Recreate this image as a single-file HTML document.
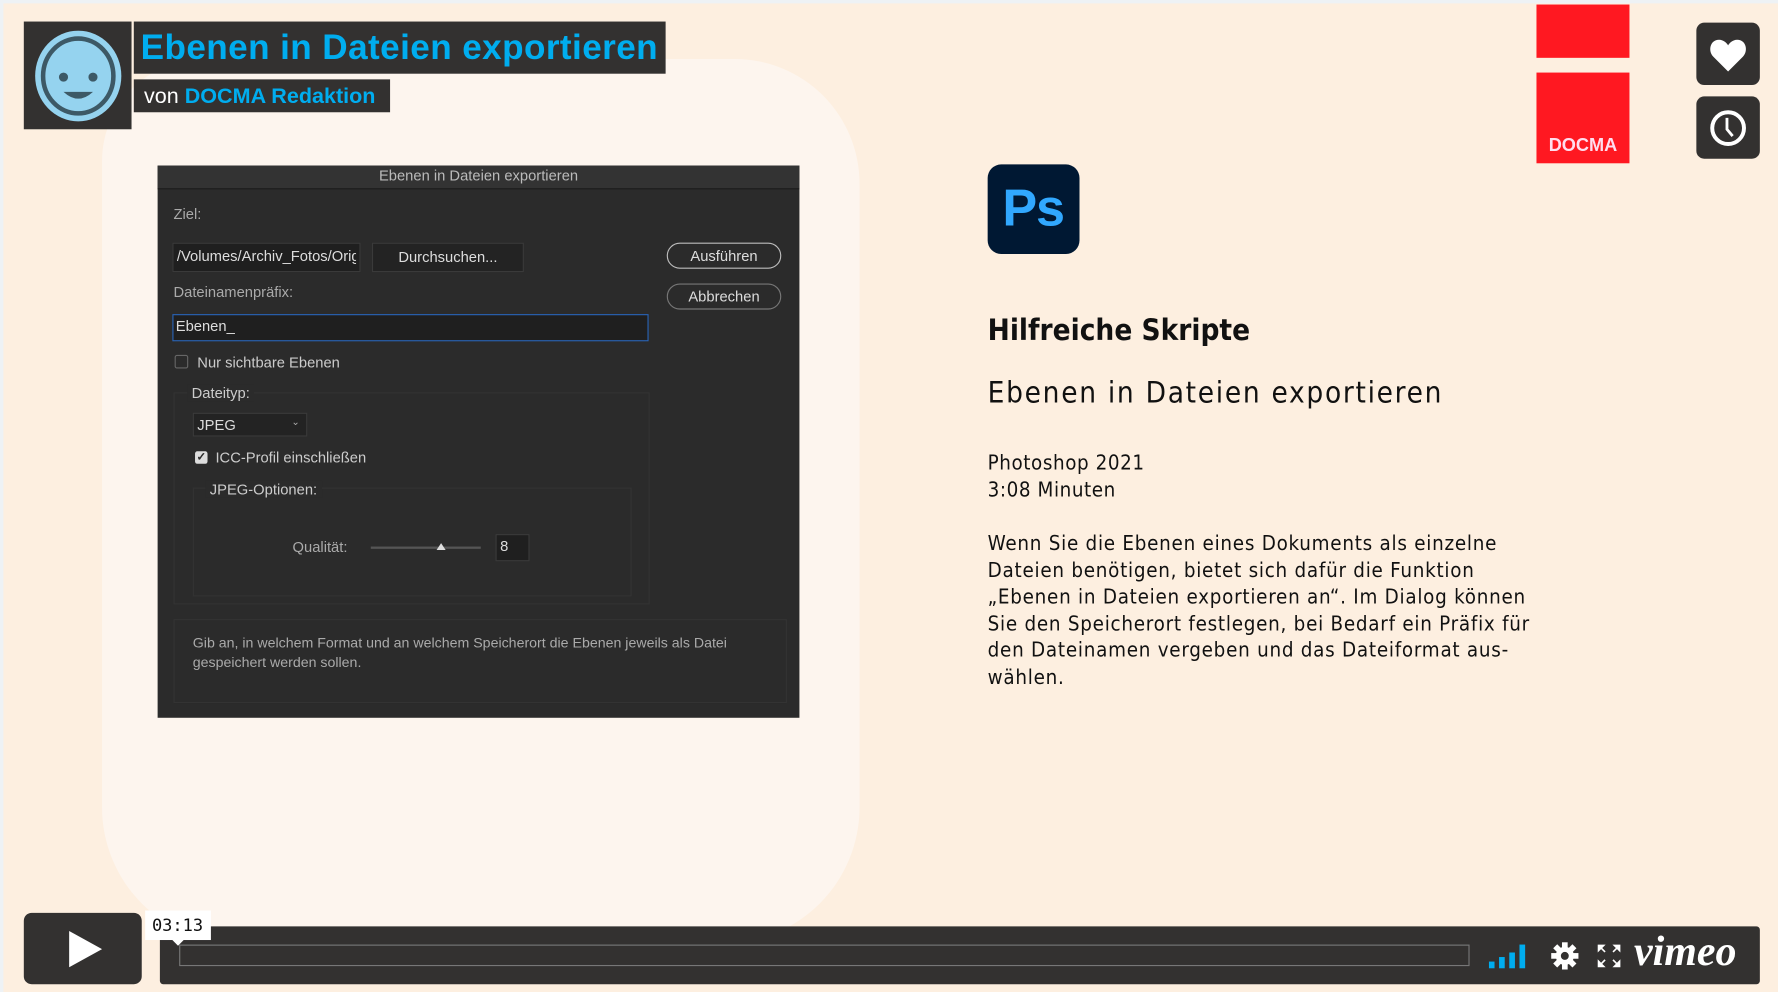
<!DOCTYPE html>
<html><head><meta charset="utf-8"><style>
html,body{margin:0;padding:0;width:1778px;height:992px;overflow:hidden;background:#eef2f5}
#s{position:absolute;left:0;top:0;width:1568px;height:875px;transform:scale(1.13393);transform-origin:0 0;background:#fdefe0;font-family:"Liberation Sans",sans-serif;overflow:hidden}
.a{position:absolute}
.blob{left:90px;top:52px;width:668px;height:780px;background:#fdf5ee;border-radius:90px 110px 120px 120px}
.dlg{left:139px;top:146px;width:566px;height:487px;background:#2b2b2b;color:#c8c8c8;font-size:13px}
.dlg .a{white-space:nowrap}
.inp{background:#1f1f1f;border:1px solid #3a3a3a}
.btn{border:1.5px solid #bdbdbd;border-radius:12px;text-align:center;color:#ddd;font-size:13px;line-height:21px}
.grp{border:1px solid #333}
.txt{font-family:"DejaVu Sans Condensed","DejaVu Sans",sans-serif;color:#111}
</style></head><body><div id="s">
<div class="a" style="left:0;top:0;width:1568px;height:3px;background:#eef2f5"></div>
<div class="a" style="left:0;top:0;width:3px;height:875px;background:#eef2f5"></div>
<div class="a blob"></div>

<div class="a" style="left:21px;top:19px;width:95px;height:95px;background:#333130"></div>
<svg class="a" style="left:28px;top:27px" width="82" height="82" viewBox="0 0 82 82"><ellipse cx="41" cy="40" rx="38" ry="40" fill="#95d3ef"/><ellipse cx="41" cy="40" rx="31" ry="33" fill="none" stroke="#3d5966" stroke-width="4"/><circle cx="28" cy="41" r="4" fill="#3d5966"/><circle cx="54" cy="41" r="4" fill="#3d5966"/><path d="M28 54 Q41 66 54 54 Z" fill="#3d5966"/></svg>
<div class="a" style="left:118px;top:19px;width:469px;height:46px;background:#333130"></div>
<div class="a" style="left:124px;top:24px;font-size:31px;font-weight:bold;color:#00adef;letter-spacing:0.35px;white-space:nowrap">Ebenen in Dateien exportieren</div>
<div class="a" style="left:118px;top:70px;width:226px;height:29px;background:#333130"></div>
<div class="a" style="left:127px;top:75px;font-size:19px;color:#fff;white-space:nowrap">von <b style="color:#00adef">DOCMA Redaktion</b></div>

<div class="a dlg">
 <div class="a" style="left:0;top:0;width:566px;height:20px;background:#333;border-bottom:1px solid #1a1a1a"></div>
 <div class="a" style="left:0;width:566px;top:1px;text-align:center;color:#bbb">Ebenen in Dateien exportieren</div>
 <div class="a" style="left:14px;top:35px;color:#aaa">Ziel:</div>
 <div class="a inp" style="left:13px;top:68px;width:164px;height:24px"></div>
 <div class="a" style="left:17px;top:72px;color:#ddd;width:158px;overflow:hidden">/Volumes/Archiv_Fotos/Orig</div>
 <div class="a inp" style="left:189px;top:68px;width:132px;height:24px;background:#232323"></div>
 <div class="a" style="left:189px;top:73px;width:134px;text-align:center;color:#ddd">Durchsuchen...</div>
 <div class="a btn" style="left:449px;top:68px;width:99px;height:21px">Ausführen</div>
 <div class="a btn" style="left:449px;top:104px;width:99px;height:21px;border-color:#777">Abbrechen</div>
 <div class="a" style="left:14px;top:104px;color:#aaa">Dateinamenpräfix:</div>
 <div class="a" style="left:13px;top:131px;width:418px;height:22px;background:#1f1f1f;border:1.5px solid #2a64b6"></div>
 <div class="a" style="left:16px;top:134px;color:#ddd">Ebenen_</div>
 <div class="a" style="left:15px;top:167px;width:10px;height:10px;border:1px solid #666;border-radius:2px"></div>
 <div class="a" style="left:35px;top:166px;color:#ccc">Nur sichtbare Ebenen</div>
 <div class="a grp" style="left:14px;top:200px;width:418px;height:185px"></div>
 <div class="a" style="left:26px;top:193px;background:#2b2b2b;padding:0 4px;color:#ccc">Dateityp:</div>
 <div class="a inp" style="left:31px;top:218px;width:99px;height:19px;background:#232323"></div>
 <div class="a" style="left:35px;top:221px;color:#ddd">JPEG</div>
 <div class="a" style="left:118px;top:221px;color:#aaa;font-size:9px">⌄</div>
 <div class="a" style="left:33px;top:252px;width:11px;height:11px;background:#ddd;border-radius:2px;color:#2b2b2b;font-size:10px;line-height:11px;text-align:center;font-weight:bold">✓</div>
 <div class="a" style="left:51px;top:250px;color:#ccc">ICC-Profil einschließen</div>
 <div class="a grp" style="left:31px;top:284px;width:385px;height:94px"></div>
 <div class="a" style="left:42px;top:278px;background:#2b2b2b;padding:0 4px;color:#ccc">JPEG-Optionen:</div>
 <div class="a" style="left:119px;top:329px;color:#aaa">Qualität:</div>
 <div class="a" style="left:188px;top:336px;width:97px;height:2px;background:#555"></div>
 <div class="a" style="left:246px;top:333px;width:0;height:0;border-left:4px solid transparent;border-right:4px solid transparent;border-bottom:6px solid #ddd"></div>
 <div class="a inp" style="left:298px;top:325px;width:28px;height:22px"></div>
 <div class="a" style="left:302px;top:328px;color:#ddd">8</div>
 <div class="a grp" style="left:14px;top:400px;width:539px;height:72px"></div>
 <div class="a" style="left:31px;top:413px;color:#aaa;font-size:12.5px;line-height:17px;white-space:normal;width:480px">Gib an, in welchem Format und an welchem Speicherort die Ebenen jeweils als Datei gespeichert werden sollen.</div>
</div>

<div class="a" style="left:871px;top:145px;width:81px;height:79px;background:#001833;border-radius:12px"></div>
<div class="a" style="left:884px;top:156px;font-size:46px;font-weight:bold;color:#31a8ff;letter-spacing:-1px">Ps</div>

<div class="a txt" style="left:871px;top:277px;font-size:26px;font-weight:bold">Hilfreiche Skripte</div>
<div class="a txt" style="left:871px;top:332px;font-size:26px;letter-spacing:1.5px">Ebenen in Dateien exportieren</div>
<div class="a txt" style="left:871px;top:397px;font-size:18px;line-height:24px;letter-spacing:0.5px">Photoshop 2021<br>3:08 Minuten</div>
<div class="a txt" style="left:871px;top:468px;font-size:18px;line-height:23.6px;width:520px;letter-spacing:0.65px;white-space:nowrap">Wenn Sie die Ebenen eines Dokuments als einzelne<br>Dateien benötigen, bietet sich dafür die Funktion<br>„Ebenen in Dateien exportieren an“. Im Dialog können<br>Sie den Speicherort festlegen, bei Bedarf ein Präfix für<br>den Dateinamen vergeben und das Dateiformat aus-<br>wählen.</div>

<div class="a" style="left:1355px;top:4px;width:82px;height:47px;background:#ff1821"></div>
<div class="a" style="left:1355px;top:64px;width:82px;height:80px;background:#ff1821"></div>
<div class="a" style="left:1355px;top:120px;width:82px;text-align:center;color:#fde;font-weight:bold;font-size:16px">DOCMA</div>

<div class="a" style="left:1496px;top:20px;width:56px;height:55px;background:#333130;border-radius:7px"></div>
<svg class="a" style="left:1506px;top:30px" width="36" height="36" viewBox="0 0 36 36"><path d="M18 33 L5 20 C0 15 2 5 10 5 C14 5 17 8 18 10 C19 8 22 5 26 5 C34 5 36 15 31 20 Z" fill="#fff"/></svg>
<div class="a" style="left:1496px;top:85px;width:56px;height:55px;background:#333130;border-radius:7px"></div>
<svg class="a" style="left:1506px;top:95px" width="36" height="36" viewBox="0 0 36 36"><circle cx="18" cy="18" r="14" fill="none" stroke="#fff" stroke-width="3.5"/><path d="M17 9 V19 L22 25" fill="none" stroke="#fff" stroke-width="2.5"/></svg>

<div class="a" style="left:21px;top:805px;width:104px;height:63px;background:#333130;border-radius:7px"></div>
<svg class="a" style="left:58px;top:819px" width="34" height="36"><path d="M3 2 L32 18 L3 34 Z" fill="#fff"/></svg>
<div class="a" style="left:141px;top:817px;width:1411px;height:51px;background:#333130;border-radius:3px"></div>
<div class="a" style="left:158px;top:833px;width:1136px;height:17px;border:1px solid #777"></div>
<div class="a" style="left:128px;top:803px;width:58px;height:26px;background:#fff"></div>
<div class="a" style="left:134px;top:807px;font-family:'DejaVu Sans Mono','Liberation Mono',monospace;font-size:15px;color:#111">03:13</div>
<div class="a" style="left:152px;top:829px;width:0;height:0;border-left:5px solid transparent;border-right:5px solid transparent;border-top:5px solid #fff"></div>
<svg class="a" style="left:1313px;top:832px" width="40" height="22"><rect x="0" y="16" width="5" height="6" fill="#00adef"/><rect x="9" y="12" width="5" height="10" fill="#00adef"/><rect x="18" y="8" width="5" height="14" fill="#00adef"/><rect x="27" y="1" width="5" height="21" fill="#00adef"/></svg>
<svg class="a" style="left:1367px;top:830px" width="26" height="26" viewBox="0 0 26 26"><g fill="#fff"><circle cx="13" cy="13" r="8"/><rect x="10.5" y="1" width="5" height="24"/><rect x="1" y="10.5" width="24" height="5"/><rect x="10.5" y="1" width="5" height="24" transform="rotate(45 13 13)"/><rect x="10.5" y="1" width="5" height="24" transform="rotate(-45 13 13)"/></g><circle cx="13" cy="13" r="3.5" fill="#333130"/></svg>
<svg class="a" style="left:1408px;top:832px" width="22" height="22" viewBox="0 0 22 22"><g fill="#fff"><path d="M1 1 H8 L5 4 L8 7 L7 8 L4 5 L1 8 Z"/><path d="M21 1 V8 L18 5 L15 8 L14 7 L17 4 L14 1 Z"/><path d="M1 21 V14 L4 17 L7 14 L8 15 L5 18 L8 21 Z"/><path d="M21 21 H14 L17 18 L14 15 L15 14 L18 17 L21 14 Z"/></g></svg>
<div class="a" style="left:1441px;top:818px;font-family:'Liberation Serif',serif;font-style:italic;font-weight:bold;font-size:37px;color:#fff;letter-spacing:0px">vimeo</div>
</div></body></html>
